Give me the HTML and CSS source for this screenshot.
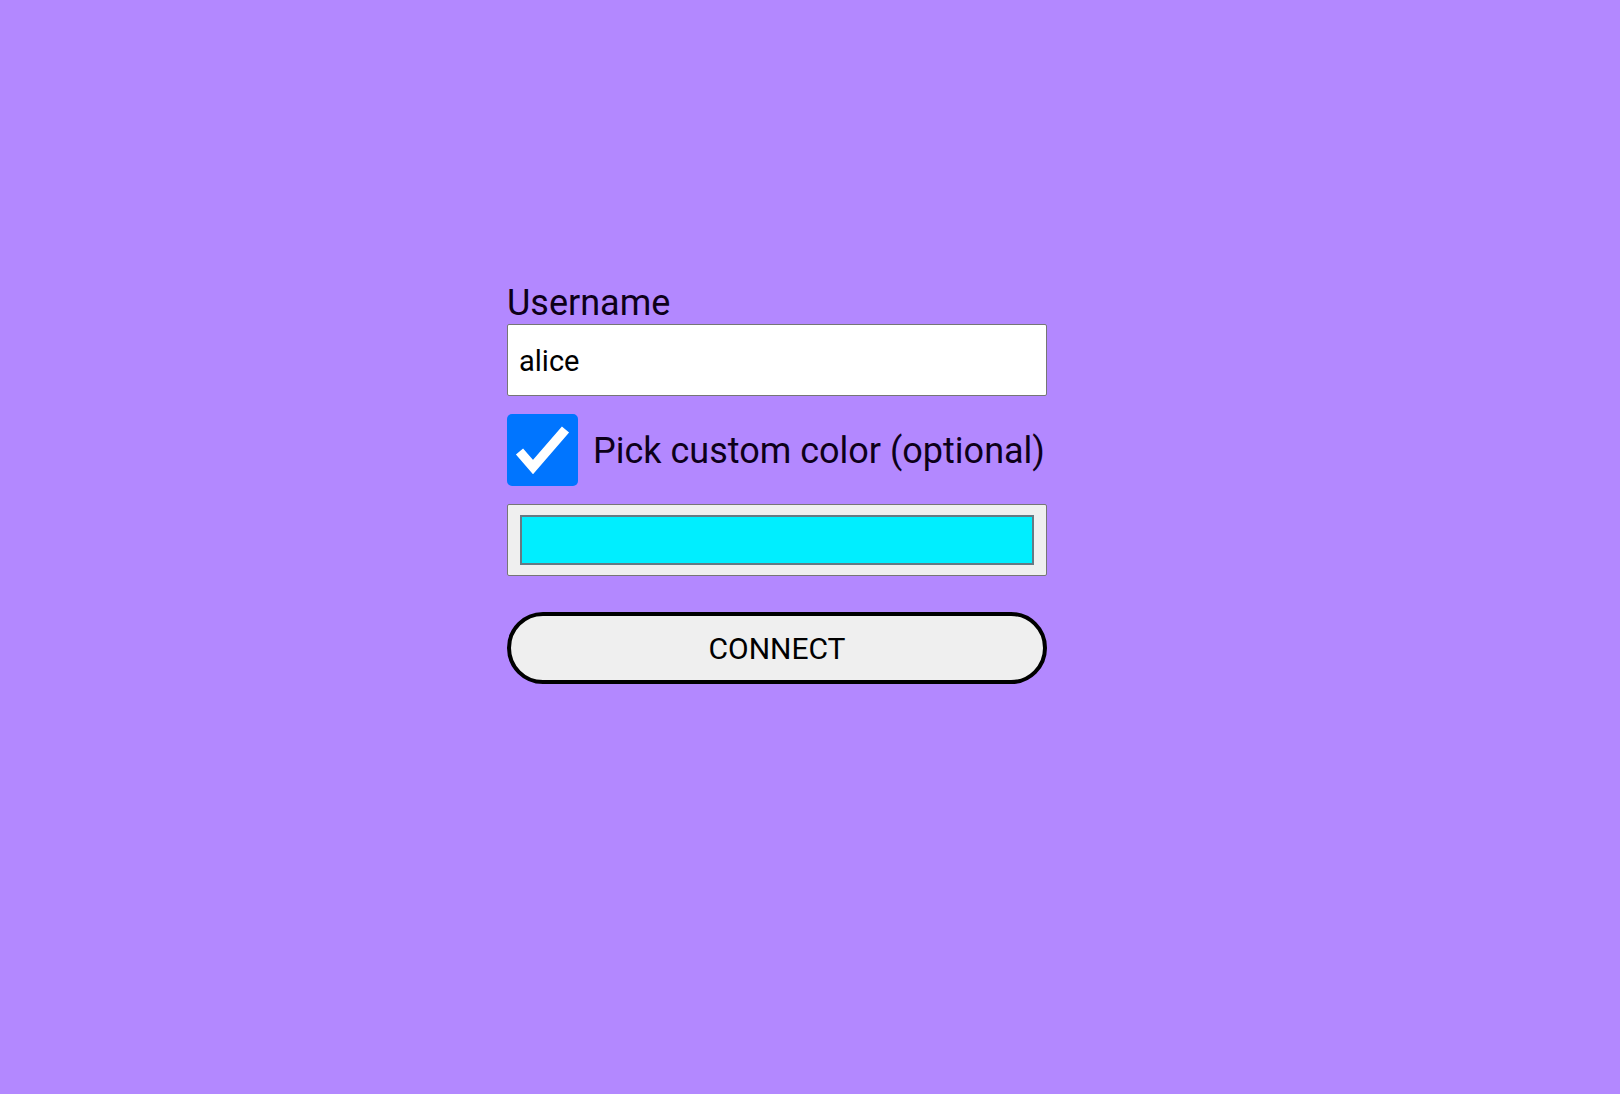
FILE: index.html
```html
<!DOCTYPE html>
<html lang="en">
<head>
<meta charset="utf-8">
<title>Connect</title>
<link rel="stylesheet" href="styles.css">
</head>
<body>
<main class="page">
  <form class="form">
    <label class="field-label" for="username">Username</label>
    <input class="text-input" id="username" type="text" value="alice">
    <div class="check-row">
      <span class="checkbox" role="checkbox" aria-checked="true">
        <svg viewBox="0 0 71 72" width="71" height="72" aria-hidden="true">
          <polyline points="12.5,37.5 26,53 58.5,15.5" fill="none" stroke="#fff" stroke-width="9.5" stroke-linecap="butt" stroke-linejoin="miter"/>
        </svg>
      </span>
      <span class="check-label">Pick custom color (optional)</span>
    </div>
    <div class="color-input">
      <div class="swatch"></div>
    </div>
    <button class="connect" type="button">CONNECT</button>
  </form>
</main>
</body>
</html>
```
FILE: styles.css
```css
html, body {
  margin: 0;
  padding: 0;
}
body {
  background: #b388ff;
  font-family: Roboto, "Liberation Sans", sans-serif;
  color: #0d0019;
  min-height: 1094px;
}
.page {
  padding: 283px 0 0 507px;
}
.form {
  width: 540px;
  display: flex;
  flex-direction: column;
}
.field-label {
  display: block;
  font-size: 36px;
  line-height: 40px;
  margin-bottom: 1px;
}
.text-input {
  box-sizing: border-box;
  height: 72px;
  width: 100%;
  margin: 0;
  border: 1px solid #767676;
  border-radius: 2px;
  background: #fff;
  padding: 2px 11px 0;
  font-family: Roboto, "Liberation Sans", sans-serif;
  font-size: 29px;
  color: #000;
  outline: none;
}
.check-row {
  margin-top: 18px;
  height: 72px;
  display: flex;
  align-items: center;
  gap: 15px;
}
.checkbox {
  width: 71px;
  height: 72px;
  border-radius: 5px;
  background: #0075ff;
  display: flex;
  flex: none;
}
.check-label {
  font-size: 36px;
  line-height: 42px;
  padding-top: 1px;
}
.color-input {
  margin-top: 18px;
  box-sizing: border-box;
  height: 72px;
  border: 1px solid #767676;
  border-radius: 2px;
  background: #efefef;
  padding: 10px 12px;
  display: flex;
}
.swatch {
  flex: 1;
  box-sizing: border-box;
  border: 2px solid #657a84;
  background: #00eeff;
}
.connect {
  margin-top: 36px;
  box-sizing: border-box;
  height: 72px;
  width: 100%;
  border: 4px solid #000;
  border-radius: 36px;
  background: #efefef;
  font-family: Roboto, "Liberation Sans", sans-serif;
  font-size: 30px;
  color: #000;
  padding: 0;
  cursor: pointer;
}
```
